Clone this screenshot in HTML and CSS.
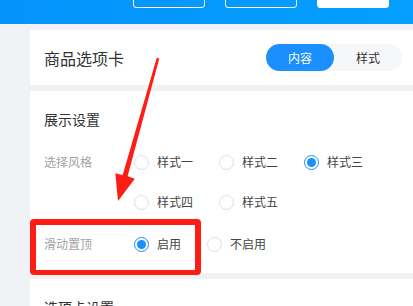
FILE: index.html
```html
<!DOCTYPE html>
<html lang="zh-CN">
<head>
<meta charset="utf-8">
<title>商品选项卡</title>
<link rel="stylesheet" href="styles.css">
</head>
<body>
<div class="page">
  <header class="topbar">
    <span class="top-btn"></span>
    <span class="top-btn"></span>
    <span class="top-btn top-btn-solid"></span>
  </header>
  <div class="main">
    <aside class="sidebar"></aside>
    <div class="content">
      <section class="card card-head">
        <h1 class="card-title">商品选项卡</h1>
        <div class="tabs">
          <span class="tab tab-active">内容</span>
          <span class="tab">样式</span>
        </div>
      </section>
      <section class="card card-body">
        <h2 class="section-title">展示设置</h2>
        <div class="form-row">
          <div class="form-label">选择风格</div>
          <div class="radio-group">
            <label class="radio"><span class="radio-dot"></span><span class="radio-text">样式一</span></label>
            <label class="radio"><span class="radio-dot"></span><span class="radio-text">样式二</span></label>
            <label class="radio"><span class="radio-dot radio-on"></span><span class="radio-text">样式三</span></label>
            <label class="radio"><span class="radio-dot"></span><span class="radio-text">样式四</span></label>
            <label class="radio"><span class="radio-dot"></span><span class="radio-text">样式五</span></label>
          </div>
        </div>
        <div class="form-row">
          <div class="form-label">滑动置顶</div>
          <div class="radio-group">
            <label class="radio"><span class="radio-dot radio-on"></span><span class="radio-text">启用</span></label>
            <label class="radio"><span class="radio-dot"></span><span class="radio-text">不启用</span></label>
          </div>
        </div>
      </section>
      <section class="card card-body">
        <h2 class="section-title">选项卡设置</h2>
      </section>
    </div>
  </div>
  <div class="highlight"></div>
  <svg class="arrow" width="413" height="306" viewBox="0 0 413 306" aria-hidden="true">
    <polygon points="156.8,57.7 159.3,58.4 127.6,176.3 134.8,178.8 118,201 115.3,173.2 122.6,175.2" fill="#fe1d14"/>
  </svg>
</div>
</body>
</html>
```
FILE: styles.css
```css
* { box-sizing: border-box; }
html, body { margin: 0; padding: 0; }
body {
  width: 413px;
  height: 306px;
  overflow: hidden;
  background: #f0f2f5;
  font-family: "Noto Sans CJK SC", "Noto Sans", sans-serif;
  color: #333;
}
.page {
  position: relative;
  width: 413px;
  height: 306px;
  overflow: hidden;
}
.topbar {
  height: 24px;
  background: linear-gradient(90deg, #0493fb, #049ffe);
  display: flex;
  align-items: flex-end;
  gap: 20px;
  padding: 0 0 16px 133px;
  overflow: hidden;
}
.top-btn {
  flex: none;
  width: 72px;
  height: 30px;
  border: 1px solid #ffffff;
  border-radius: 3px;
}
.top-btn-solid { background: #ffffff; }
.main {
  display: flex;
  height: 282px;
}
.sidebar {
  width: 30px;
  flex: none;
  background: #f0f2f5;
}
.content {
  flex: 1;
  display: flex;
  flex-direction: column;
  gap: 6px;
  padding-top: 6px;
}
.card {
  background: #ffffff;
  flex: none;
}
.card-head {
  height: 55px;
  display: flex;
  align-items: center;
  justify-content: space-between;
  padding: 0 11px 0 14px;
}
.card-title {
  margin: 0;
  font-size: 16px;
  font-weight: 400;
  color: #333;
  line-height: 20px;
}
.tabs {
  display: flex;
  width: 136px;
  height: 27px;
  border-radius: 14px;
  background: #f6f7f9;
}
.tab {
  width: 68px;
  display: flex;
  align-items: center;
  justify-content: center;
  font-size: 12px;
  color: #333;
  border-radius: 14px;
}
.tab-active {
  background: #1a8ffd;
  color: #ffffff;
}
.card-body {
  padding: 18px 0 19px 14px;
}
.section-title {
  margin: 0;
  font-size: 14px;
  font-weight: 400;
  line-height: 20px;
  color: #333;
}
.form-row {
  display: flex;
  margin-top: 22px;
}
.section-title + .form-row { margin-top: 23px; }
.form-label {
  width: 90px;
  flex: none;
  font-size: 12px;
  line-height: 20px;
  color: #a3a3a3;
}
.radio-group {
  flex: 1;
  display: flex;
  flex-wrap: wrap;
  row-gap: 20px;
}
.radio {
  display: flex;
  align-items: center;
  height: 20px;
  margin-right: 26px;
}
.radio-dot {
  width: 15px;
  height: 15px;
  border: 1px solid #dcdfe6;
  border-radius: 50%;
  background: #fff;
  display: flex;
  align-items: center;
  justify-content: center;
  margin-right: 8px;
}
.radio-on { border-color: #1a8ffd; }
.radio-on::after {
  content: "";
  width: 9px;
  height: 9px;
  border-radius: 50%;
  background: #1a8ffd;
}
.radio-text {
  font-size: 12px;
  color: #444;
  line-height: 20px;
}
.highlight {
  position: absolute;
  left: 30px;
  top: 219px;
  width: 171px;
  height: 56px;
  border: 6px solid #fe1d14;
  border-bottom-width: 5px;
  border-radius: 4px;
}
.arrow {
  position: absolute;
  left: 0;
  top: 0;
}
```
